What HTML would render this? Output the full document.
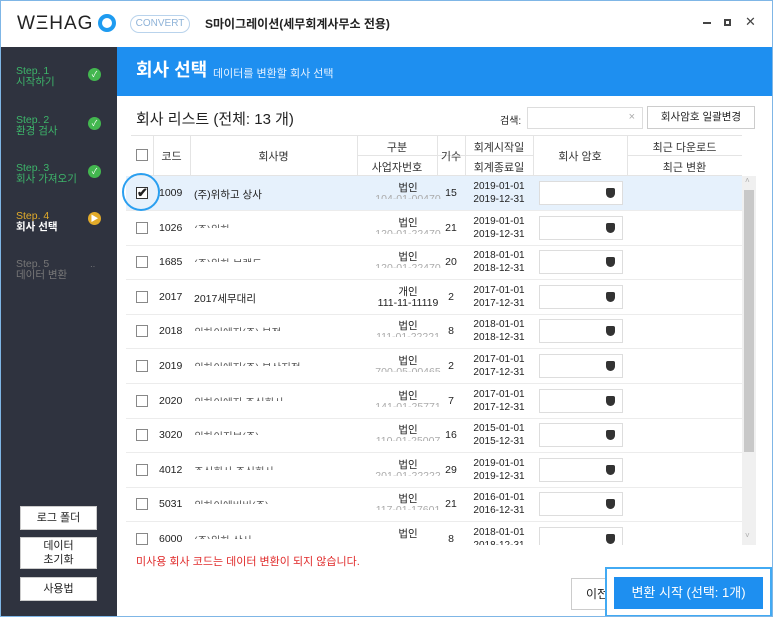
<!DOCTYPE html>
<html><head><meta charset="utf-8"><style>
*{margin:0;padding:0;box-sizing:border-box}
body{width:773px;height:617px;overflow:hidden;background:#fff;font-family:"Liberation Sans","Noto Sans CJK KR",sans-serif;position:relative;color:#222}
.a{position:absolute}
.frame{left:0;top:0;width:773px;height:617px;border:1px solid #7fb6e6;pointer-events:none;z-index:9}
.side{left:0;top:47px;width:117px;height:570px;background:#2f333f}
.st{left:16px;font-size:10.5px;line-height:11px;color:#3db56a}
.ck{width:13px;height:13px;border-radius:50%;background:#43b74f;left:88px;color:#fff;font-size:8px;text-align:center;line-height:13px}
.sb{left:20px;width:77px;background:#fff;border:1px solid #ccc;font-size:11px;text-align:center;color:#222}
.hd{left:117px;top:47px;width:655px;height:49px;background:#1e8ff0}
.th{font-size:11px;color:#333;text-align:center}
.row{left:126px;width:616px;height:35px;border-bottom:1px solid #ececec;font-size:10.5px}
.row div{position:absolute}
.cb{left:10px;top:11px;width:12px;height:12px;border:1px solid #888;background:#fff}
.cd{left:33px;top:11px}
.nm{left:68px;top:11px;color:#555}
.ty{left:258px;width:48px;text-align:center;top:4px}
.bn{left:236px;width:92px;text-align:center;top:17px;color:#aaa;height:6px;overflow:hidden}
.gs{left:311px;width:28px;text-align:center;top:11px}
.dt{left:339px;width:68px;text-align:center;top:4px;line-height:13px;font-size:10px}
.pw{left:413px;top:5px;width:84px;height:24px;border:1px solid #ddd;background:#fff}
.pw:after{content:"";position:absolute;right:7px;top:6px;width:9px;height:10px;background:#333;border-radius:2px 2px 5px 5px}
.vl{position:absolute;width:1px;background:#e4e4e4}
</style></head><body>
<div class="a frame"></div>
<!-- title -->
<div class="a" style="left:17px;top:13px;font-size:19px;letter-spacing:1px;color:#222">WΞHAG</div>
<div class="a" style="left:98px;top:14px;width:18px;height:18px;border-radius:50%;border:4px solid #1e9bf0"></div>
<div class="a" style="left:130px;top:15px;width:60px;height:18px;border:1px solid #b9d3ec;border-radius:10px;font-size:10px;color:#8fb3d8;text-align:center;line-height:16px">CONVERT</div>
<div class="a" style="left:205px;top:15px;font-size:12px;font-weight:bold;color:#222">S마이그레이션(세무회계사무소 전용)</div>
<div class="a" style="left:703px;top:22px;width:8px;height:2px;background:#444"></div>
<div class="a" style="left:724px;top:19px;width:7px;height:7px;border:2px solid #444"></div>
<div class="a" style="left:745px;top:14px;font-size:13px;color:#444">✕</div>
<!-- sidebar -->
<div class="a side"></div>
<div class="a st" style="top:66px">Step. 1<br>시작하기</div><div class="a ck" style="top:68px">✓</div>
<div class="a st" style="top:115px">Step. 2<br>환경 검사</div><div class="a ck" style="top:117px">✓</div>
<div class="a st" style="top:163px">Step. 3<br>회사 가져오기</div><div class="a ck" style="top:165px">✓</div>
<div class="a st" style="top:211px;color:#e2ab2a">Step. 4<br><b style="color:#fff">회사 선택</b></div><div class="a ck" style="top:212px;background:#e2ab2a">▶</div>
<div class="a st" style="top:259px;color:#777">Step. 5<br>데이터 변환</div><div class="a" style="left:90px;top:262px;color:#888;font-size:8px">··</div>
<div class="a sb" style="top:506px;height:24px;line-height:22px">로그 폴더</div>
<div class="a sb" style="top:537px;height:32px;line-height:14px;padding-top:1px">데이터<br>초기화</div>
<div class="a sb" style="top:577px;height:24px;line-height:22px">사용법</div>
<!-- header -->
<div class="a hd"></div>
<div class="a" style="left:136px;top:56px;font-size:18px;font-weight:bold;color:#fff">회사 선택</div>
<div class="a" style="left:213px;top:65px;font-size:11px;color:#e6f2ff">데이터를 변환할 회사 선택</div>
<div class="a" style="left:136px;top:108px;font-size:15px">회사 리스트 (전체: 13 개)</div>
<div class="a" style="left:500px;top:112px;font-size:10px">검색:</div>
<div class="a" style="left:527px;top:107px;width:116px;height:22px;border:1px solid #ddd"><span style="position:absolute;right:7px;top:3px;font-size:11px;color:#aaa">×</span></div>
<div class="a" style="left:647px;top:106px;width:108px;height:23px;border:1px solid #ccc;font-size:10.5px;text-align:center;line-height:21px">회사암호 일괄변경</div>
<!-- table header -->
<div class="a" style="left:131px;top:135px;width:611px;height:41px;border-top:1px solid #e4e4e4;border-bottom:1px solid #e4e4e4"></div>
<div class="a" style="left:357px;top:155px;width:108px;height:1px;background:#e4e4e4"></div>
<div class="a" style="left:465px;top:155px;width:68px;height:1px;background:#e4e4e4"></div>
<div class="a" style="left:627px;top:155px;width:115px;height:1px;background:#e4e4e4"></div>
<div class="vl" style="left:153px;top:135px;height:41px"></div>
<div class="vl" style="left:190px;top:135px;height:41px"></div>
<div class="vl" style="left:357px;top:135px;height:41px"></div>
<div class="vl" style="left:437px;top:135px;height:41px"></div>
<div class="vl" style="left:465px;top:135px;height:41px"></div>
<div class="vl" style="left:533px;top:135px;height:41px"></div>
<div class="vl" style="left:627px;top:135px;height:41px"></div>
<div class="a" style="left:136px;top:149px;width:12px;height:12px;border:1px solid #888"></div>
<div class="a th" style="left:153px;width:37px;top:148px">코드</div>
<div class="a th" style="left:190px;width:167px;top:148px">회사명</div>
<div class="a th" style="left:357px;width:80px;top:139px">구분</div>
<div class="a th" style="left:357px;width:80px;top:159px">사업자번호</div>
<div class="a th" style="left:437px;width:28px;top:148px">기수</div>
<div class="a th" style="left:465px;width:68px;top:139px">회계시작일</div>
<div class="a th" style="left:465px;width:68px;top:159px">회계종료일</div>
<div class="a th" style="left:533px;width:94px;top:148px">회사 암호</div>
<div class="a th" style="left:627px;width:115px;top:139px">최근 다운로드</div>
<div class="a th" style="left:627px;width:115px;top:159px">최근 변환</div>
<!-- rows -->
<div class="a" style="left:126px;top:176px;width:616px;height:369px;overflow:hidden">
<div class="a row" style="top:0;left:0;background:#e6f1fc"><div class="cb" style="border-color:#333"><span style="position:absolute;left:0;top:-3px;font-size:13px;font-weight:bold">✔</span></div><div class="cd">1009</div><div class="nm" style="color:#222">(주)위하고 상사</div><div class="ty">법인</div><div class="bn">104-01-00470</div><div class="gs">15</div><div class="dt">2019-01-01<br>2019-12-31</div><div class="pw"></div></div>
<div class="a row" style="top:34.6px;left:0"><div class="cb"></div><div class="cd">1026</div><div class="nm" style="height:6px;overflow:hidden">(주)위하</div><div class="ty">법인</div><div class="bn">120-01-22470</div><div class="gs">21</div><div class="dt">2019-01-01<br>2019-12-31</div><div class="pw"></div></div>
<div class="a row" style="top:69.2px;left:0"><div class="cb"></div><div class="cd">1685</div><div class="nm" style="height:6px;overflow:hidden">(주)위하 브랜드</div><div class="ty">법인</div><div class="bn">120-01-22470</div><div class="gs">20</div><div class="dt">2018-01-01<br>2018-12-31</div><div class="pw"></div></div>
<div class="a row" style="top:103.8px;left:0"><div class="cb"></div><div class="cd">2017</div><div class="nm" style="color:#222">2017세무대리</div><div class="ty">개인</div><div class="bn" style="color:#222;height:auto">111-11-11119</div><div class="gs">2</div><div class="dt">2017-01-01<br>2017-12-31</div><div class="pw"></div></div>
<div class="a row" style="top:138.4px;left:0"><div class="cb"></div><div class="cd">2018</div><div class="nm" style="height:6px;overflow:hidden">위하이에지(주) 본점</div><div class="ty">법인</div><div class="bn">111-01-22221</div><div class="gs">8</div><div class="dt">2018-01-01<br>2018-12-31</div><div class="pw"></div></div>
<div class="a row" style="top:173px;left:0"><div class="cb"></div><div class="cd">2019</div><div class="nm" style="height:6px;overflow:hidden">위하이에지(주) 부산지점</div><div class="ty">법인</div><div class="bn">700-05-00465</div><div class="gs">2</div><div class="dt">2017-01-01<br>2017-12-31</div><div class="pw"></div></div>
<div class="a row" style="top:207.6px;left:0"><div class="cb"></div><div class="cd">2020</div><div class="nm" style="height:6px;overflow:hidden">위하이에지 주식회사</div><div class="ty">법인</div><div class="bn">141-01-25771</div><div class="gs">7</div><div class="dt">2017-01-01<br>2017-12-31</div><div class="pw"></div></div>
<div class="a row" style="top:242.2px;left:0"><div class="cb"></div><div class="cd">3020</div><div class="nm" style="height:6px;overflow:hidden">위하이지보(주)</div><div class="ty">법인</div><div class="bn">110-01-25007</div><div class="gs">16</div><div class="dt">2015-01-01<br>2015-12-31</div><div class="pw"></div></div>
<div class="a row" style="top:276.8px;left:0"><div class="cb"></div><div class="cd">4012</div><div class="nm" style="height:6px;overflow:hidden">주식회사 주식회사</div><div class="ty">법인</div><div class="bn">201-01-22222</div><div class="gs">29</div><div class="dt">2019-01-01<br>2019-12-31</div><div class="pw"></div></div>
<div class="a row" style="top:311.4px;left:0"><div class="cb"></div><div class="cd">5031</div><div class="nm" style="height:6px;overflow:hidden">위하이에비비(주)</div><div class="ty">법인</div><div class="bn">117-01-17601</div><div class="gs">21</div><div class="dt">2016-01-01<br>2016-12-31</div><div class="pw"></div></div>
<div class="a row" style="top:346px;left:0"><div class="cb"></div><div class="cd">6000</div><div class="nm" style="height:6px;overflow:hidden">(주)위하 상사</div><div class="ty">법인</div><div class="bn"></div><div class="gs">8</div><div class="dt">2018-01-01<br>2018-12-31</div><div class="pw"></div></div>
</div>
<!-- scrollbar -->
<div class="a" style="left:742px;top:176px;width:14px;height:369px;background:#f0f0f0"></div>
<div class="a" style="left:744px;top:190px;width:10px;height:262px;background:#c8c8c8"></div>
<div class="a" style="left:745px;top:176px;font-size:8px;color:#aaa">˄</div>
<div class="a" style="left:745px;top:531px;font-size:8px;color:#aaa">˅</div>
<!-- selected circle -->
<div class="a" style="left:122px;top:173px;width:38px;height:38px;border:2px solid #2a9ff0;border-radius:50%"></div>
<div class="a" style="left:136px;top:553px;font-size:11px;color:#e02a2a">미사용 회사 코드는 데이터 변환이 되지 않습니다.</div>
<div class="a" style="left:571px;top:578px;width:46px;height:32px;border:1px solid #ccc;font-size:12px;line-height:30px;padding-left:14px">이전</div>
<div class="a" style="left:605px;top:567px;width:167px;height:50px;border:2px solid #42aaf3;background:#fff"></div>
<div class="a" style="left:614px;top:577px;width:149px;height:32px;background:#1e8ff0;color:#fff;font-size:13px;text-align:center;line-height:32px">변환 시작 (선택: 1개)</div>
</body></html>
